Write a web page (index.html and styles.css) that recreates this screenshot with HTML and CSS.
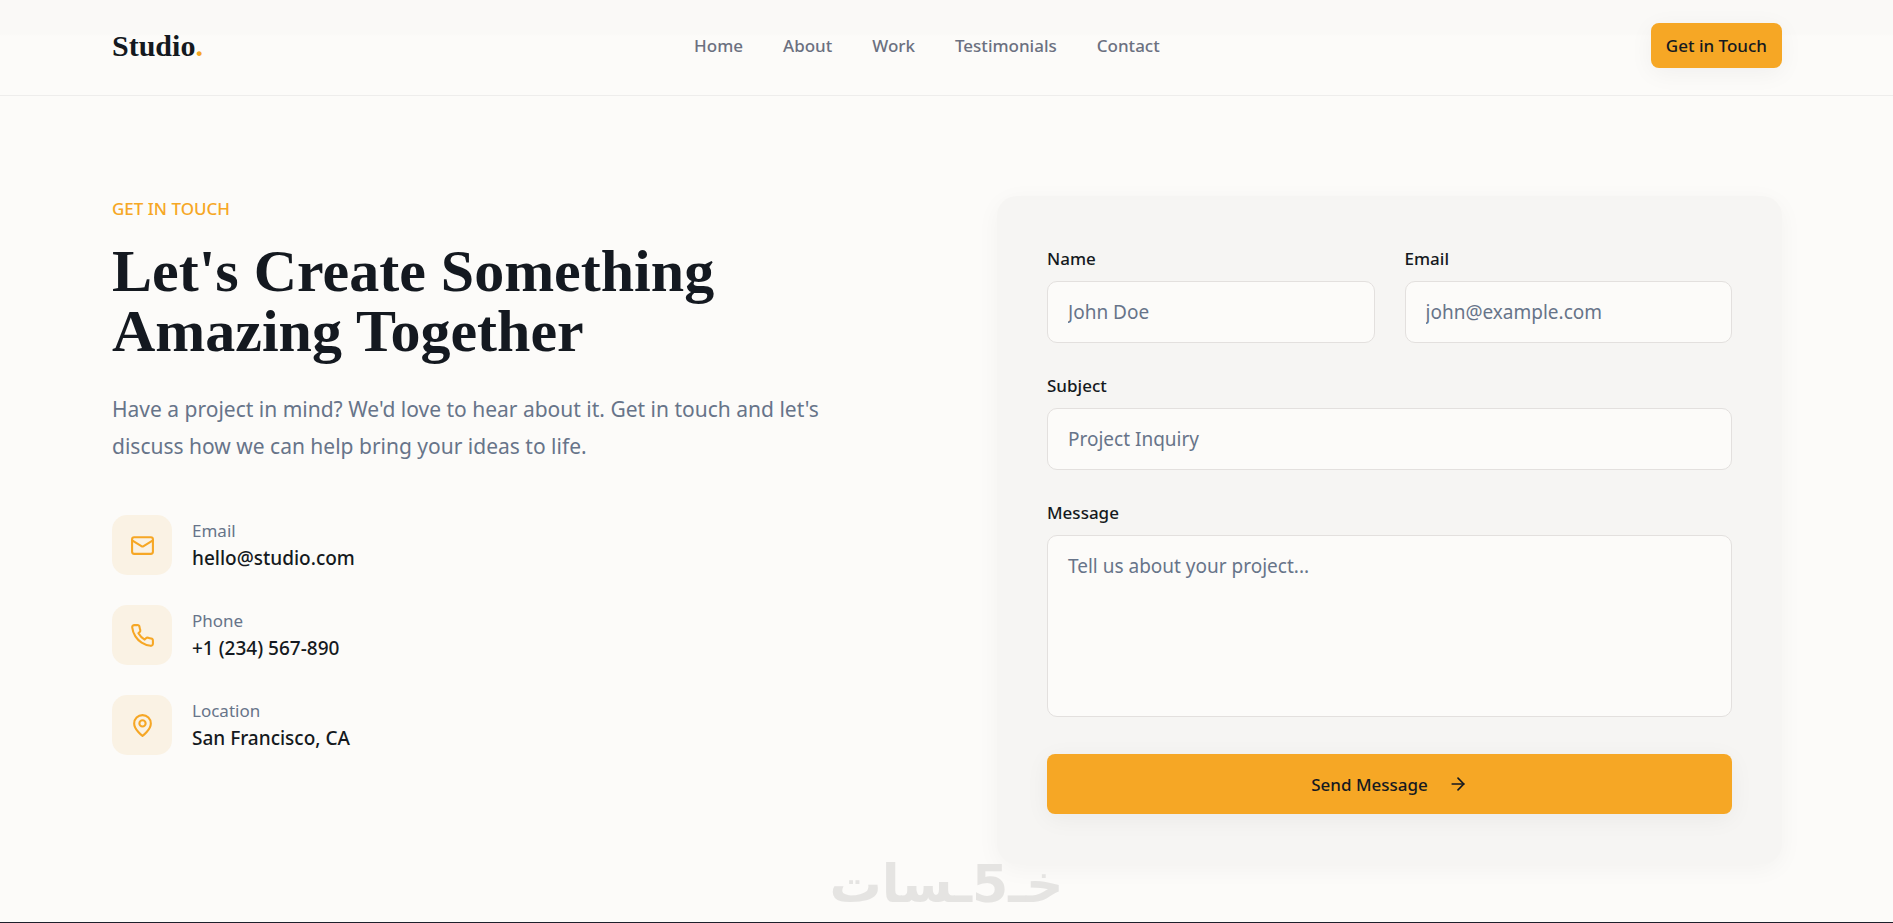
FILE: index.html
```html
<!DOCTYPE html>
<html lang="en">
<head>
<meta charset="utf-8">
<meta name="viewport" content="width=device-width, initial-scale=1">
<title>Studio. Contact</title>
<link rel="stylesheet" href="styles.css">
</head>
<body>
<header class="header">
  <a class="logo" href="#">Studio<span class="logo-dot">.</span></a>
  <nav class="nav">
    <a href="#">Home</a>
    <a href="#">About</a>
    <a href="#">Work</a>
    <a href="#">Testimonials</a>
    <a href="#">Contact</a>
  </nav>
  <button class="button button-small" type="button">Get in Touch</button>
</header>

<main class="contact">
  <section class="intro">
    <p class="eyebrow">GET IN TOUCH</p>
    <h1 class="title">Let's Create Something<br>Amazing Together</h1>
    <p class="lead">Have a project in mind? We'd love to hear about it. Get in touch and let's discuss how we can help bring your ideas to life.</p>
    <ul class="details">
      <li class="detail">
        <span class="detail-icon"><svg class="icon" viewBox="0 0 24 24"><rect width="20" height="16" x="2" y="4" rx="2"/><path d="m22 7-8.97 5.7a1.94 1.94 0 0 1-2.06 0L2 7"/></svg></span>
        <div><p class="detail-label">Email</p><p class="detail-value">hello@studio.com</p></div>
      </li>
      <li class="detail">
        <span class="detail-icon"><svg class="icon" viewBox="0 0 24 24"><path d="M22 16.92v3a2 2 0 0 1-2.18 2 19.79 19.79 0 0 1-8.63-3.07 19.5 19.5 0 0 1-6-6 19.79 19.79 0 0 1-3.07-8.67A2 2 0 0 1 4.11 2h3a2 2 0 0 1 2 1.72 12.84 12.84 0 0 0 .7 2.81 2 2 0 0 1-.45 2.11L8.09 9.91a16 16 0 0 0 6 6l1.27-1.27a2 2 0 0 1 2.11-.45 12.84 12.84 0 0 0 2.81.7A2 2 0 0 1 22 16.92z"/></svg></span>
        <div><p class="detail-label">Phone</p><p class="detail-value">+1 (234) 567-890</p></div>
      </li>
      <li class="detail">
        <span class="detail-icon"><svg class="icon" viewBox="0 0 24 24"><path d="M20 10c0 6-8 12-8 12s-8-6-8-12a8 8 0 0 1 16 0Z"/><circle cx="12" cy="10" r="3"/></svg></span>
        <div><p class="detail-label">Location</p><p class="detail-value">San Francisco, CA</p></div>
      </li>
    </ul>
  </section>

  <form class="card">
    <div class="row">
      <div class="field"><label for="name">Name</label><input id="name" type="text" placeholder="John Doe"></div>
      <div class="field"><label for="email">Email</label><input id="email" type="email" placeholder="john@example.com"></div>
    </div>
    <div class="field"><label for="subject">Subject</label><input id="subject" type="text" placeholder="Project Inquiry"></div>
    <div class="field"><label for="message">Message</label><textarea id="message" placeholder="Tell us about your project..."></textarea></div>
    <button class="button button-large" type="button">Send Message
      <svg class="icon-arrow" viewBox="0 0 24 24"><path d="M5 12h14"/><path d="m12 5 7 7-7 7"/></svg>
    </button>
  </form>
</main>
<footer class="footer"></footer>
<div class="watermark" lang="ar" dir="rtl">خـ5ـسات</div>
</body>
</html>
```
FILE: styles.css
```css
:root {
  --bg: #fcfbf9;
  --card: #f6f5f3;
  --accent: #f6a725;
  --ink: #141920;
  --muted: #677489;
  --line: #e3e0de;
  --sans: "Noto Sans", "Open Sans", sans-serif;
  --serif: "Liberation Serif", "Times New Roman", serif;
}
* { box-sizing: border-box; }
body {
  margin: 0;
  min-height: 100vh;
  display: flex;
  flex-direction: column;
  background: var(--bg);
  color: var(--ink);
  font: 16px/25px var(--sans);
}
p, h1, ul { margin: 0; padding: 0; }
a { color: inherit; text-decoration: none; }

.header {
  display: flex;
  justify-content: space-between;
  align-items: center;
  padding: 23px 111px 27px 112px;
  border-bottom: 1px solid #eeedec;
  background: linear-gradient(#faf9f7 34px, var(--bg) 36px);
}
.logo { font: 700 30px/40px var(--serif); }
.logo-dot { color: var(--accent); }
.nav { display: flex; gap: 40px; color: #6b7080; font-size: 17px; font-weight: 500; }

.button {
  border: 0;
  border-radius: 8px;
  background: var(--accent);
  color: var(--ink);
  font: 500 17px/25px var(--sans);
  box-shadow: 0 5px 25px rgba(20, 25, 32, 0.05);
  cursor: pointer;
}
.button-small { padding: 10px 15px; }
.button-large {
  display: flex;
  align-items: center;
  justify-content: center;
  gap: 20px;
  width: 100%;
  height: 60px;
  margin-top: 7px;
}

.contact {
  flex: 1;
  display: grid;
  grid-template-columns: 1fr 1fr;
  gap: 100px;
  align-items: start;
  padding: 100px 111px 58px 112px;
}
.eyebrow { margin-bottom: 20px; color: var(--accent); font-size: 17px; font-weight: 500; }
.title { margin-bottom: 30px; font: 700 60px/60px var(--serif); }
.lead { max-width: 750px; margin-bottom: 50px; color: var(--muted); font-size: 21px; line-height: 37px; }

.details { display: grid; gap: 30px; list-style: none; }
.detail { display: flex; align-items: center; gap: 20px; }
.detail-icon {
  display: grid;
  place-items: center;
  width: 60px;
  height: 60px;
  border-radius: 15px;
  background: #faf2e4;
}
.icon, .icon-arrow {
  fill: none;
  stroke: currentColor;
  stroke-width: 2;
  stroke-linecap: round;
  stroke-linejoin: round;
}
.icon { width: 25px; height: 25px; color: var(--accent); }
.icon-arrow { width: 20px; height: 20px; }
.detail-label { color: var(--muted); font-size: 17px; }
.detail-value { font-size: 19px; font-weight: 500; line-height: 30px; }

.card {
  display: grid;
  gap: 30px;
  padding: 50px;
  border-radius: 20px;
  background: var(--card);
  box-shadow: 0 5px 25px rgba(20, 25, 32, 0.04);
}
.row { display: grid; grid-template-columns: 1fr 1fr; gap: 30px; }
.field { display: grid; gap: 10px; }
.field label { font-size: 17px; font-weight: 500; }
.field input, .field textarea {
  width: 100%;
  min-width: 0;
  height: 62px;
  padding: 15px 20px;
  border: 1px solid var(--line);
  border-radius: 10px;
  background: var(--bg);
  color: var(--ink);
  font: 19px/30px var(--sans);
}
.field textarea { display: block; height: 182px; resize: none; }
.field ::placeholder { color: var(--muted); opacity: 1; }

.footer { border-top: 1px solid #1d1f2b; }
.watermark {
  position: fixed;
  bottom: 4px;
  left: 50%;
  transform: translateX(-50%);
  color: #e5e4e2;
  font: 700 52px/70px "DejaVu Sans", sans-serif;
  white-space: nowrap;
  pointer-events: none;
}
```
